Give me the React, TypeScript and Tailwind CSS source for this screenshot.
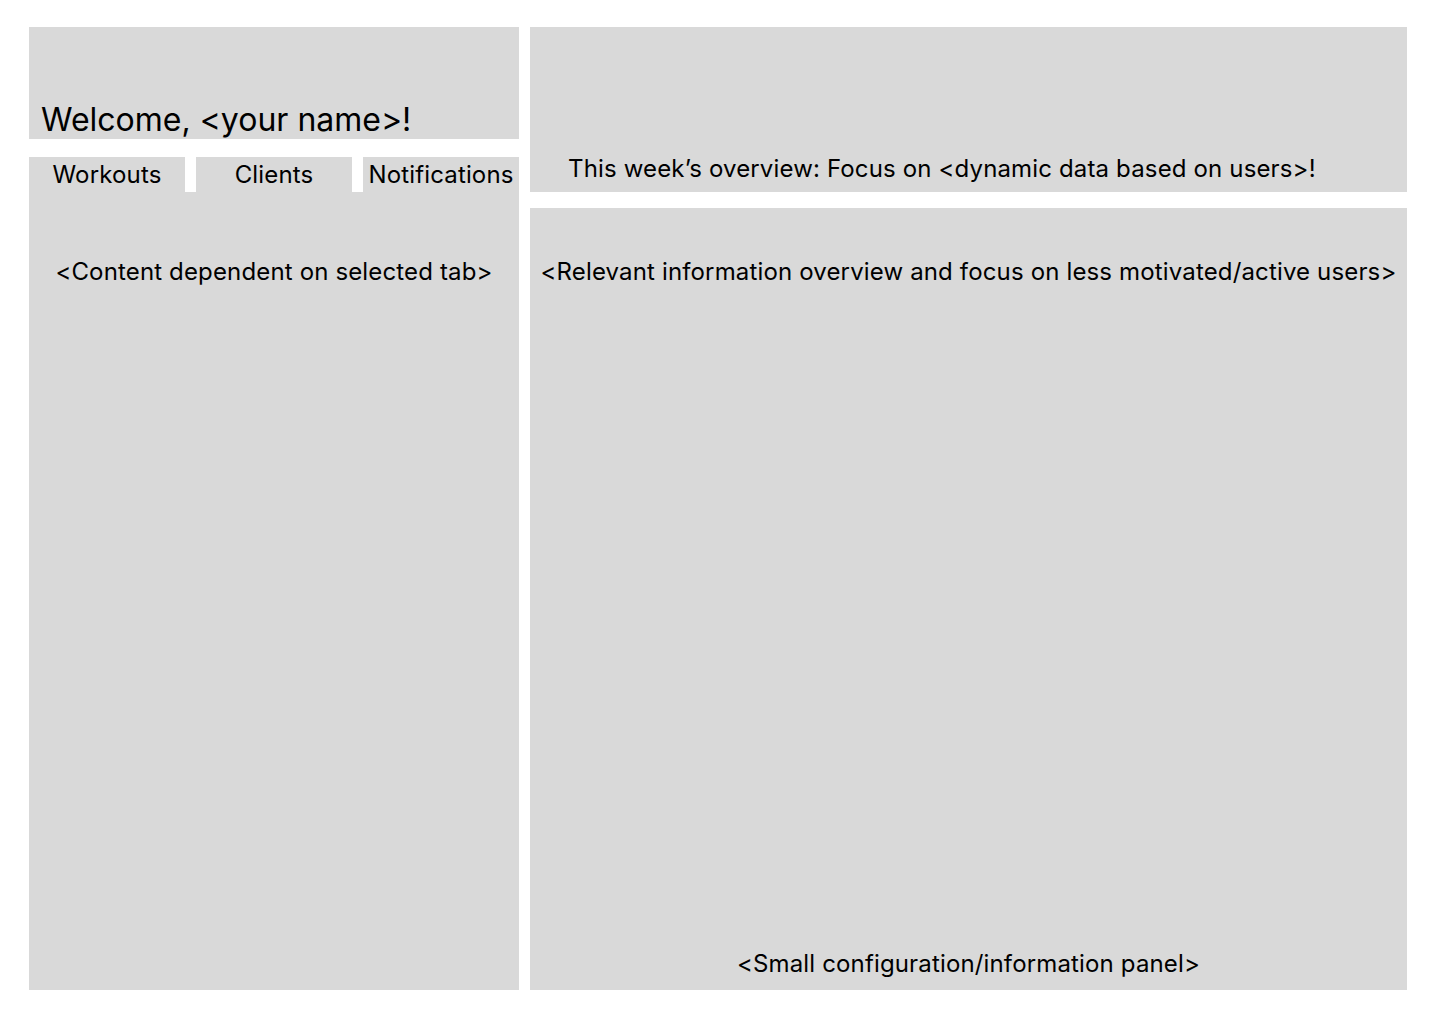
export default function App() {
  const tabs = ['Workouts', 'Clients', 'Notifications'];

  return (
    <div
      className="w-[1440px] h-[1024px] bg-white flex gap-[11px] pl-[29px] pt-[27px] text-black"
      style={{ fontFamily: 'Inter, "Liberation Sans", sans-serif' }}
    >
      {/* Left column */}
      <div className="w-[490px] h-[963px] flex flex-col">
        <div className="h-[112px] bg-[#d9d9d9] flex items-end pl-[12px]">
          <h1 className="text-[32px] leading-[39px] font-normal">Welcome, &lt;your name&gt;!</h1>
        </div>
        <div className="mt-[18px] flex gap-[11px]">
          {tabs.map((tab) => (
            <div key={tab} className="flex-1 h-[35px] bg-[#d9d9d9] flex items-center justify-center text-[24px] leading-[29px] tracking-[0.15px]">
              {tab}
            </div>
          ))}
        </div>
        <div className="flex-1 bg-[#d9d9d9] pt-[65px] text-center text-[24px] leading-[29px] tracking-[0.15px]">
          &lt;Content dependent on selected tab&gt;
        </div>
      </div>

      {/* Right column */}
      <div className="w-[877px] h-[963px] flex flex-col gap-[16px]">
        <div className="h-[165px] bg-[#d9d9d9] flex items-end pl-[38px] pb-[9px] text-[24px] leading-[29px] tracking-[0.15px]">
          This week’s overview: Focus on &lt;dynamic data based on users&gt;!
        </div>
        <div className="flex-1 bg-[#d9d9d9] flex flex-col justify-between pt-[49px] pb-[12px] text-center text-[24px] leading-[29px] tracking-[0.15px]">
          <p>&lt;Relevant information overview and focus on less motivated/active users&gt;</p>
          <p>&lt;Small configuration/information panel&gt;</p>
        </div>
      </div>
    </div>
  );
}
